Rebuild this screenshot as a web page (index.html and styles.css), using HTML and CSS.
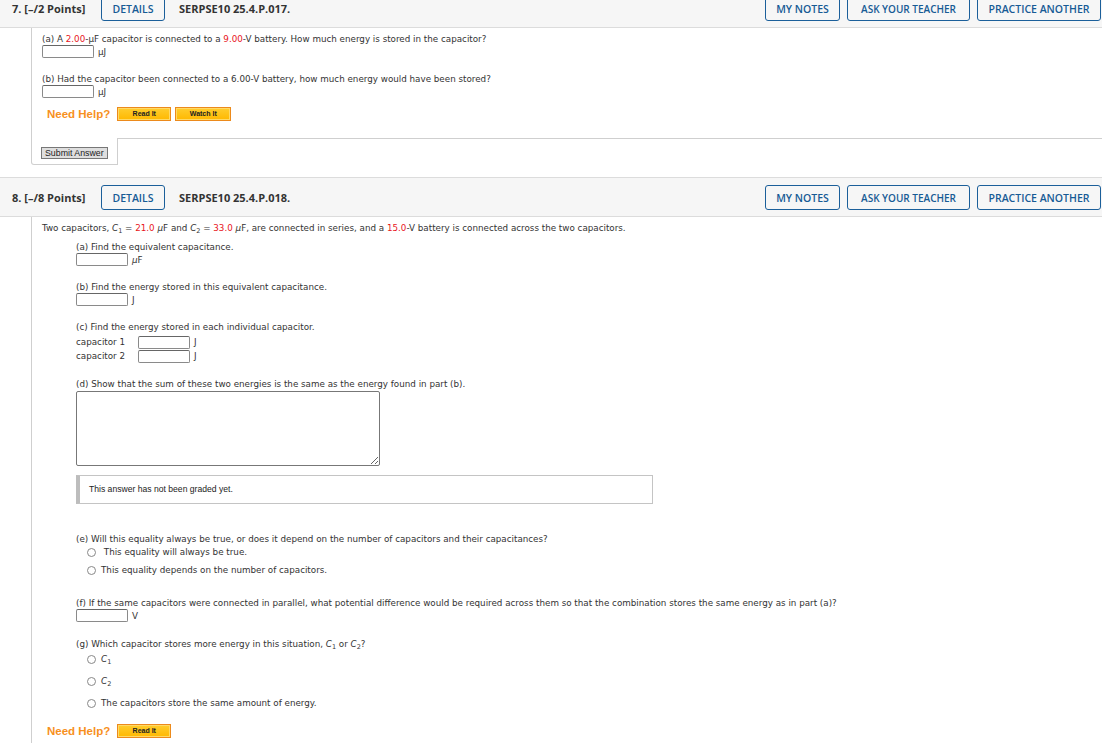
FILE: index.html
```html
<!DOCTYPE html>
<html>
	<head>
		<meta charset="UTF-8">
		<title>Assignment</title>
		<link rel="stylesheet" href="styles.css">
	</head>
	<body>
		<div class="page">
			<!-- question 7 -->
			<div class="q-head">
				<span class="q-num">7. [–/2 Points]</span>
				<span class="btn b-details">DETAILS</span>
				<span class="q-code">SERPSE10 25.4.P.017.</span>
				<div class="q-tools">
					<span class="btn b-notes">MY NOTES</span>
					<span class="btn b-ask">ASK YOUR TEACHER</span>
					<span class="btn b-practice">PRACTICE ANOTHER</span>
				</div>
			</div>
			<div class="q-body q7">
				<p class="line">(a) A <span class="red">2.00</span>-μF capacitor is connected to a <span class="red">9.00</span>-V battery. How much energy is stored in the capacitor?</p>
				<div class="answer"><input type="text" class="box"><span>μJ</span></div>
				<p class="line gap">(b) Had the capacitor been connected to a 6.00-V battery, how much energy would have been stored?</p>
				<div class="answer"><input type="text" class="box"><span>μJ</span></div>
				<div class="help">
					<span class="help-txt">Need Help?</span>
					<span class="help-btn">Read It</span>
					<span class="help-btn wide">Watch It</span>
				</div>
			</div>
			<div class="submit-row">
				<div class="submit-cell"><button class="submit">Submit Answer</button></div>
				<div class="submit-rest"></div>
			</div>

			<!-- question 8 -->
			<div class="q-head">
				<span class="q-num">8. [–/8 Points]</span>
				<span class="btn b-details">DETAILS</span>
				<span class="q-code">SERPSE10 25.4.P.018.</span>
				<div class="q-tools">
					<span class="btn b-notes">MY NOTES</span>
					<span class="btn b-ask">ASK YOUR TEACHER</span>
					<span class="btn b-practice">PRACTICE ANOTHER</span>
				</div>
			</div>
			<div class="q-body q8">
				<p class="line">Two capacitors, <i>C</i><sub>1</sub> = <span class="red">21.0</span> <i>μ</i>F and <i>C</i><sub>2</sub> = <span class="red">33.0</span> <i>μ</i>F, are connected in series, and a <span class="red">15.0</span>-V battery is connected across the two capacitors.</p>
				<div class="indent">
					<p class="line first">(a) Find the equivalent capacitance.</p>
					<div class="answer"><input type="text" class="box"><span><i>μ</i>F</span></div>

					<p class="line gap">(b) Find the energy stored in this equivalent capacitance.</p>
					<div class="answer"><input type="text" class="box"><span>J</span></div>

					<p class="line gap">(c) Find the energy stored in each individual capacitor.</p>
					<div class="caps">
						<div class="cap-row"><span class="cap-lbl">capacitor 1</span><input type="text" class="box"><span>J</span></div>
						<div class="cap-row"><span class="cap-lbl">capacitor 2</span><input type="text" class="box"><span>J</span></div>
					</div>

					<p class="line gap-d">(d) Show that the sum of these two energies is the same as the energy found in part (b).</p>
					<textarea class="essay"></textarea>
					<div class="graded">This answer has not been graded yet.</div>

					<p class="line gap-e">(e) Will this equality always be true, or does it depend on the number of capacitors and their capacitances?</p>
					<div class="choices">
						<label class="radio"><span class="dot"></span><span>&nbsp;This equality will always be true.</span></label>
						<label class="radio"><span class="dot"></span><span>This equality depends on the number of capacitors.</span></label>
					</div>

					<p class="line gap-f">(f) If the same capacitors were connected in parallel, what potential difference would be required across them so that the combination stores the same energy as in part (a)?</p>
					<div class="answer"><input type="text" class="box"><span>V</span></div>

					<p class="line gap-g">(g) Which capacitor stores more energy in this situation, <i>C</i><sub>1</sub> or <i>C</i><sub>2</sub>?</p>
					<div class="choices wide-gap">
						<label class="radio"><span class="dot"></span><span><i>C</i><sub>1</sub></span></label>
						<label class="radio"><span class="dot"></span><span><i>C</i><sub>2</sub></span></label>
						<label class="radio"><span class="dot"></span><span>The capacitors store the same amount of energy.</span></label>
					</div>
				</div>
				<div class="help help-8">
					<span class="help-txt">Need Help?</span>
					<span class="help-btn">Read It</span>
				</div>
			</div>
		</div>
	</body>
</html>
```

FILE: styles.css
```css
body{
	margin: 0;
	background: #fff;
	font-family: "DejaVu Sans", Verdana, sans-serif;
	font-size: 8.75px;
	color: #333;
	overflow: hidden;
}
.page{
	margin-top: -12px;
}
.q-head{
	display: flex;
	align-items: center;
	background: #f6f6f6;
	border-top: 1px solid #dcdcdc;
	border-bottom: 1px solid #dcdcdc;
	padding: 7px 1px 6px 0;
	font-family: "Open Sans", sans-serif;
	font-size: 11px;
}
.q-num{
	width: 89px;
	padding-left: 12px;
	font-weight: 700;
	color: #333;
}
.q-code{
	margin-left: 14px;
	font-weight: 700;
	color: #333;
}
.q-tools{
	margin-left: auto;
	display: flex;
	gap: 7px;
}
.btn{
	box-sizing: border-box;
	display: inline-flex;
	align-items: center;
	justify-content: center;
	height: 25px;
	border: 1px solid #1b5f9a;
	border-radius: 3px;
	color: #175b95;
	font-weight: 600;
	font-size: 10.5px;
	white-space: nowrap;
}
.b-details{
	width: 64px;
}
.b-notes{
	width: 75px;
}
.b-ask{
	width: 123px;
	font-size: 10px;
}
.b-practice{
	width: 124px;
}
.q-body{
	margin-left: 31px;
	border-left: 1px solid #cfcfcf;
	padding-left: 10px;
}
.q7{
	padding-top: 6px;
	padding-bottom: 17px;
}
.q8{
	padding-top: 6px;
	padding-bottom: 10px;
}
.line{
	margin: 0;
	line-height: 11px;
	white-space: nowrap;
}
.red{
	color: #e8151b;
}
sub{
	font-size: 6.5px;
	vertical-align: -2px;
	line-height: 0;
}
.answer{
	display: flex;
	align-items: center;
	height: 13px;
	gap: 4px;
}
.box{
	box-sizing: border-box;
	width: 52px;
	height: 13px;
	margin: 0;
	padding: 0;
	border: 1px solid #8a8a8a;
	border-top-color: #666;
	border-radius: 2px;
	background: #fff;
}
.gap{
	margin-top: 16px;
}
.help{
	display: flex;
	align-items: center;
	height: 15px;
	margin-top: 8px;
	padding-left: 5px;
}
.help-txt{
	font-family: "Liberation Sans", Arial, sans-serif;
	font-weight: 700;
	font-size: 11.5px;
	color: #f7901e;
	margin-right: 7px;
}
.help-btn{
	box-sizing: border-box;
	width: 54px;
	height: 14px;
	margin-right: 4px;
	border: 1px solid #ec8a1c;
	background: linear-gradient(#ffcd2e, #ffb800);
	font-family: "Liberation Sans", Arial, sans-serif;
	font-weight: 700;
	font-size: 7px;
	color: #222;
	text-align: center;
	line-height: 12px;
	box-shadow: inset 0 0 0 1px #ffd966;
}
.help-btn.wide{
	width: 56px;
}
.submit-row{
	display: flex;
	height: 27px;
	margin-bottom: 12px;
}
.submit-cell{
	box-sizing: border-box;
	width: 87px;
	margin-left: 31px;
	padding: 9px 0 0 9px;
	border-left: 1px solid #cfcfcf;
	border-right: 1px solid #cfcfcf;
	border-bottom: 1px solid #cfcfcf;
	border-bottom-left-radius: 3px;
}
.submit-rest{
	flex: 1;
	border-top: 1px solid #cfcfcf;
}
.submit{
	height: 12px;
	padding: 0 3px;
	border: 1px solid #777;
	background: #dedede;
	font-family: "Liberation Sans", Arial, sans-serif;
	font-size: 8.8px;
	line-height: 10px;
	color: #222;
}
.indent{
	padding-left: 34px;
}
.first{
	margin-top: 8px;
}
.caps{
	margin-top: 2px;
}
.cap-row{
	display: flex;
	align-items: center;
	height: 14px;
	gap: 4px;
}
.cap-lbl{
	width: 58px;
}
.gap-d{
	margin-top: 16px;
}
.essay{
	display: block;
	box-sizing: border-box;
	width: 304px;
	height: 75px;
	margin: 1px 0 0 0;
	border: 1px solid #777;
	border-radius: 2px;
	resize: both;
}
.graded{
	box-sizing: border-box;
	width: 577px;
	height: 29px;
	margin-top: 9px;
	padding-left: 9px;
	border: 1px solid #c4c4c4;
	border-left: 4px solid #bdbdbd;
	font-family: "Liberation Sans", Arial, sans-serif;
	font-size: 8.6px;
	line-height: 27px;
	color: #222;
}
.gap-e{
	margin-top: 30px;
}
.choices{
	display: flex;
	flex-direction: column;
	gap: 6px;
	margin-top: 1px;
}
.choices.wide-gap{
	gap: 10px;
	margin-top: 3px;
}
.radio{
	display: flex;
	align-items: center;
	height: 12px;
	padding-left: 11px;
}
.dot{
	box-sizing: border-box;
	width: 9px;
	height: 9px;
	margin-right: 5px;
	border: 1px solid #888;
	border-radius: 50%;
	background: #fff;
}
.gap-f{
	margin-top: 22px;
}
.gap-g{
	margin-top: 17px;
}
.help-8{
	margin-top: 14px;
}
```
